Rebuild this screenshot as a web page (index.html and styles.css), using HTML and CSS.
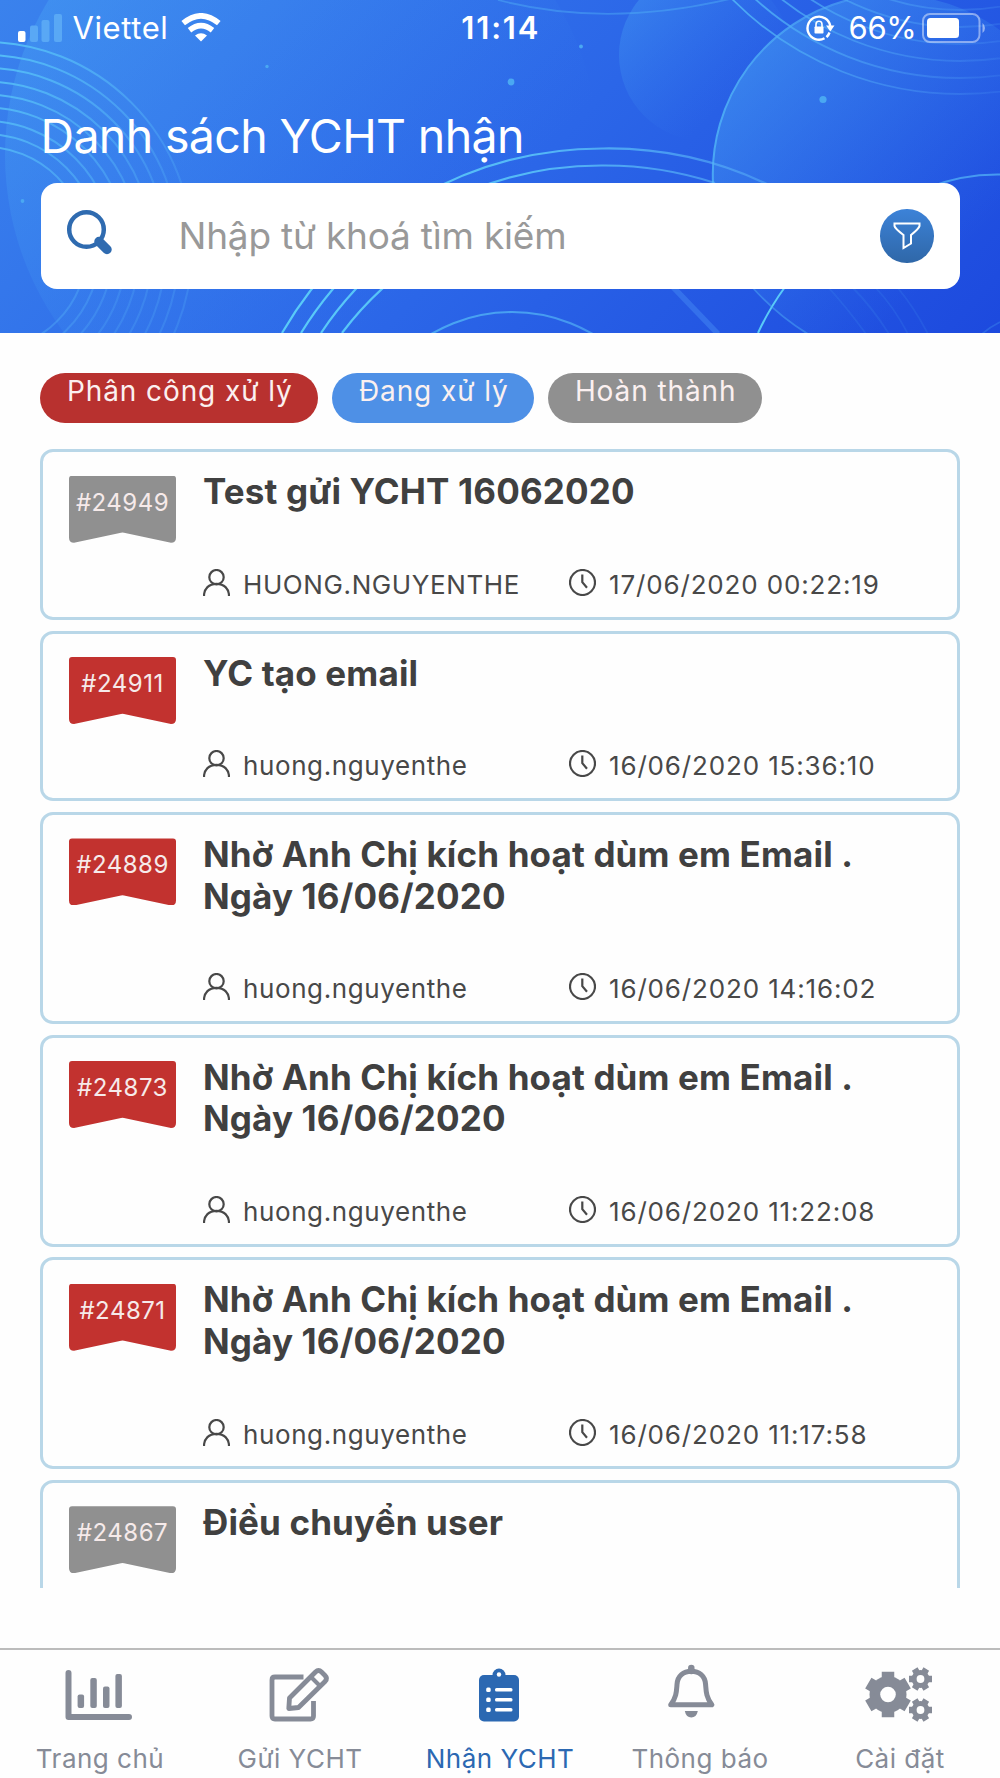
FILE: index.html
```html
<!DOCTYPE html>
<html lang="vi">
  <head>
    <meta charset="UTF-8">
    <title>Danh sách YCHT nhận</title>
    <link rel="stylesheet" href="styles.css">
  </head>
  <body>
    <svg class="defs" width="0" height="0">
      <symbol id="user" viewBox="0 0 27 27">
        <circle cx="13.5" cy="8.2" r="7.2"/>
        <path d="M1 27C1 19.5 6 14.8 13.5 14.8S26 19.5 26 27"/>
      </symbol>
      <symbol id="clock" viewBox="0 0 27 27">
        <circle cx="13.5" cy="13.5" r="12.5"/>
        <path d="M13.3 5.5V13.2L18 18.8"/>
      </symbol>
    </svg>

    <header class="header">
      <svg class="header_bg" viewBox="0 0 1000 333" preserveAspectRatio="none">
        <defs>
          <linearGradient id="bg" gradientUnits="userSpaceOnUse" x1="0" y1="0" x2="740" y2="690">
            <stop offset="0" stop-color="#3a82ed"/>
            <stop offset="0.5" stop-color="#2b66e8"/>
            <stop offset="1" stop-color="#1b46dd"/>
          </linearGradient>
          <linearGradient id="disc" x1="0.1" y1="0.1" x2="0.7" y2="0.7">
            <stop offset="0" stop-color="#4aa6f4" stop-opacity="0.65"/>
            <stop offset="1" stop-color="#3a86f0" stop-opacity="0"/>
          </linearGradient>
          <linearGradient id="ripple" gradientUnits="userSpaceOnUse" x1="0" y1="60" x2="190" y2="170">
            <stop offset="0" stop-color="#56c2f8" stop-opacity="0.9"/>
            <stop offset="1" stop-color="#56b2f8" stop-opacity="0.25"/>
          </linearGradient>
          <linearGradient id="corner" gradientUnits="userSpaceOnUse" x1="730" y1="0" x2="1000" y2="60">
            <stop offset="0" stop-color="#4fb4f6" stop-opacity="0.9"/>
            <stop offset="1" stop-color="#4f9cf6" stop-opacity="0.2"/>
          </linearGradient>
          <linearGradient id="wave" gradientUnits="userSpaceOnUse" x1="300" y1="0" x2="770" y2="0">
            <stop offset="0" stop-color="#59caf8"/>
            <stop offset="0.5" stop-color="#59c2f8" stop-opacity="0.9"/>
            <stop offset="1" stop-color="#59b0f8" stop-opacity="0.5"/>
          </linearGradient>
        </defs>
        <rect width="1000" height="333" fill="url(#bg)"/>
        <circle cx="302" cy="155" r="297" fill="url(#disc)" opacity="0.7"/>
        <circle cx="705" cy="55" r="86" fill="url(#disc)" opacity="0.6"/>
        <circle cx="893" cy="175" r="180" fill="url(#disc)" opacity="0.8"/>
        <g fill="none" stroke="url(#ripple)" stroke-width="2">
          <circle cx="-15" cy="249" r="207"/>
          <circle cx="-15" cy="249" r="194"/>
          <circle cx="-15" cy="249" r="181"/>
          <circle cx="-15" cy="249" r="167.500"/>
          <circle cx="-15" cy="249" r="154.500"/>
          <circle cx="-15" cy="249" r="141.500"/>
          <circle cx="-15" cy="249" r="128"/>
          <circle cx="-15" cy="249" r="115"/>
          <circle cx="-15" cy="249" r="102"/>
        </g>
        <g fill="none" stroke="url(#corner)" stroke-width="1.8">
          <circle cx="960" cy="-227" r="321"/>
          <circle cx="960" cy="-227" r="305"/>
          <circle cx="960" cy="-227" r="288"/>
          <circle cx="960" cy="-227" r="271"/>
          <circle cx="960" cy="-227" r="254"/>
          <circle cx="960" cy="-227" r="237"/>
          <path d="M713 183A180 180 0 0 1 848 0" stroke-width="2"/>
        </g>
        <g fill="none" stroke="url(#wave)" stroke-width="2.200">
          <path d="M282 333A370 370 0 0 1 603 148.500A370 370 0 0 1 775 188"/>
          <path d="M301 333A353 353 0 0 1 603 165.500A353 353 0 0 1 715 183"/>
          <path d="M321 333A335 335 0 0 1 520 193"/>
          <path d="M342 333A317 317 0 0 1 440 247"/>
          <circle cx="512" cy="471" r="159" opacity="0.7"/>
        </g>
        <g fill="none" stroke="#55b8f8" stroke-width="1.8">
          <path d="M758 333Q769 309 785 287" stroke="#59caf8" stroke-width="2"/>
          <path d="M927 188Q962 174 1000 174.500" opacity="0.7"/>
          <path d="M752 287Q778 316 808 334" opacity="0.4"/>
          <path d="M828 287Q848 309 866 334M852 287Q872 307 889 334M875 287Q894 307 908 334M897 287Q914 307 928 334" opacity="0.12"/>
          <path d="M982 334Q990 327 1000 322" opacity="0.25"/>
          <path d="M498 0Q610 29 738 -3" opacity="0.4"/>
          <path d="M673 287L718 334" stroke="#3f80f0" stroke-width="5.500" opacity="0.6"/>
        </g>
        <g fill="#4aa8f2">
          <circle cx="267" cy="66.500" r="1.700"/>
          <circle cx="22.500" cy="201" r="1.900"/>
          <circle cx="581" cy="46.500" r="1.900"/>
          <circle cx="511" cy="82" r="3.400"/>
          <circle cx="823" cy="99.500" r="3.600"/>
        </g>
      </svg>

      <div class="status">
        <div class="status_left">
          <svg width="44" height="28" viewBox="0 0 44 28">
            <rect x="0" y="17" width="7.500" height="11" rx="2" fill="#fff"/>
            <g fill="#59a8f5">
              <rect x="12" y="11.500" width="8" height="16.500" rx="2"/>
              <rect x="23.500" y="6" width="8" height="22" rx="2"/>
              <rect x="36" y="0" width="8" height="28" rx="2"/>
            </g>
          </svg>
          <span class="carrier">Viettel</span>
          <svg class="wifi" width="40" height="29" viewBox="0 0 40 29">
            <g fill="none" stroke="#fff" stroke-width="5.600">
              <path d="M2.200 10.200Q20-4.500 37.800 10.200"/>
              <path d="M8.500 17.200Q20 8.200 31.500 17.200"/>
            </g>
            <path d="M20 28.500L14 22.500Q20 18 26 22.500Z" fill="#fff"/>
          </svg>
        </div>
        <span class="time">11:14</span>
        <div class="status_right">
          <svg width="29" height="26" viewBox="0 0 29 26">
            <path d="M18.500 23.300A11.500 11.500 0 1 1 24.300 11" fill="none" stroke="#fff" stroke-width="2.400"/>
            <path d="M20.500 22.200A11.500 11.500 0 0 0 23.500 17.500" fill="none" stroke="#fff" stroke-width="2.400"/>
            <path d="M20 10.500H28.500L24.300 16.500Z" fill="#fff"/>
            <rect x="8.500" y="11.500" width="9" height="7" rx="0.800" fill="#fff"/>
            <path d="M10 12V9.500A3 3.200 0 0 1 16 9.500V12" fill="none" stroke="#fff" stroke-width="1.600"/>
          </svg>
          <span class="percent">66%</span>
          <svg width="64" height="30" viewBox="0 0 64 30">
            <rect x="1" y="1" width="56.500" height="28" rx="7" fill="none" stroke="#fff" stroke-opacity="0.45" stroke-width="2"/>
            <rect x="5" y="5" width="32" height="20" rx="3.500" fill="#fff"/>
            <path d="M60.500 10Q63 12 63 15T60.500 20Z" fill="#fff" fill-opacity="0.5"/>
          </svg>
        </div>
      </div>

      <h1 class="title">Danh sách YCHT nhận</h1>

      <div class="search">
        <svg width="48" height="48" viewBox="0 0 48 48">
          <circle cx="20.500" cy="20.500" r="17.300" fill="none" stroke="#2f6bb0" stroke-width="4.500"/>
          <path d="M33 32.500L41 40.500" stroke="#2f6bb0" stroke-width="9.500" stroke-linecap="round"/>
        </svg>
        <span class="placeholder">Nhập từ khoá tìm kiếm</span>
        <div class="filter">
          <svg width="28" height="28" viewBox="0 0 28 28">
            <path d="M1.500 1.500H26.500V4Q26 6.500 18 13V21.500L10.500 26V13Q2 6.500 1.500 4Z" fill="none" stroke="#fff" stroke-width="2"/>
          </svg>
        </div>
      </div>
    </header>

    <div class="legend">
      <span class="chip red">Phân công xử lý</span>
      <span class="chip blue">Đang xử lý</span>
      <span class="chip gray">Hoàn thành</span>
    </div>

    <div class="list">
      <div class="card">
        <div class="ribbon gray">#24949</div>
        <div class="card_body">
          <div class="card_title">Test gửi YCHT 16062020</div>
          <div class="meta">
            <div class="who"><svg><use href="#user"/></svg>HUONG.NGUYENTHE</div>
            <div class="when"><svg><use href="#clock"/></svg>17/06/2020 00:22:19</div>
          </div>
        </div>
      </div>
      <div class="card">
        <div class="ribbon red">#24911</div>
        <div class="card_body">
          <div class="card_title">YC tạo email</div>
          <div class="meta">
            <div class="who"><svg><use href="#user"/></svg>huong.nguyenthe</div>
            <div class="when"><svg><use href="#clock"/></svg>16/06/2020 15:36:10</div>
          </div>
        </div>
      </div>
      <div class="card tall">
        <div class="ribbon red">#24889</div>
        <div class="card_body">
          <div class="card_title">Nhờ Anh Chị kích hoạt dùm em Email .<br>Ngày 16/06/2020</div>
          <div class="meta">
            <div class="who"><svg><use href="#user"/></svg>huong.nguyenthe</div>
            <div class="when"><svg><use href="#clock"/></svg>16/06/2020 14:16:02</div>
          </div>
        </div>
      </div>
      <div class="card tall">
        <div class="ribbon red">#24873</div>
        <div class="card_body">
          <div class="card_title">Nhờ Anh Chị kích hoạt dùm em Email .<br>Ngày 16/06/2020</div>
          <div class="meta">
            <div class="who"><svg><use href="#user"/></svg>huong.nguyenthe</div>
            <div class="when"><svg><use href="#clock"/></svg>16/06/2020 11:22:08</div>
          </div>
        </div>
      </div>
      <div class="card tall">
        <div class="ribbon red">#24871</div>
        <div class="card_body">
          <div class="card_title">Nhờ Anh Chị kích hoạt dùm em Email .<br>Ngày 16/06/2020</div>
          <div class="meta">
            <div class="who"><svg><use href="#user"/></svg>huong.nguyenthe</div>
            <div class="when"><svg><use href="#clock"/></svg>16/06/2020 11:17:58</div>
          </div>
        </div>
      </div>
      <div class="card">
        <div class="ribbon gray">#24867</div>
        <div class="card_body">
          <div class="card_title">Điều chuyển user</div>
        </div>
      </div>
    </div>

    <nav class="tabs">
      <div class="tab">
        <svg width="70" height="62" viewBox="0 0 70 62" fill="none" stroke="currentColor" stroke-linecap="round" stroke-linejoin="round">
          <path d="M3.500 13V57H64" stroke-width="6"/>
          <g fill="currentColor" stroke="none">
            <rect x="12.600" y="34.500" width="6.500" height="13.500" rx="2"/>
            <rect x="25.300" y="18" width="6.500" height="30" rx="2"/>
            <rect x="38" y="26.500" width="6.500" height="21.500" rx="2"/>
            <rect x="50.400" y="14" width="6.500" height="34" rx="2"/>
          </g>
        </svg>
        <span>Trang chủ</span>
      </div>
      <div class="tab">
        <svg width="70" height="62" viewBox="0 0 70 62" fill="none" stroke="currentColor" stroke-width="4.800" stroke-linejoin="round">
          <path d="M38.500 17H10Q7 17 7 20V56Q7 59 10 59H45.500Q48.500 59 48.500 56V41"/>
          <path d="M23.800 48.500L24.500 38L50.500 12Q53.500 9 56.500 12L60 15.500Q63 18.500 60 21.500L33.500 47.500Z"/>
          <path d="M46 17L55 26" stroke-width="4"/>
        </svg>
        <span>Gửi YCHT</span>
      </div>
      <div class="tab active">
        <svg width="70" height="62" viewBox="0 0 70 62" fill="currentColor">
          <rect x="14" y="15" width="40" height="46.500" rx="5"/>
          <circle cx="34" cy="15" r="6.500"/>
          <g fill="#fff">
            <circle cx="34" cy="14.500" r="2.200"/>
            <rect x="21.200" y="27.500" width="4.500" height="4.500" rx="1.500"/>
            <rect x="21.200" y="37.500" width="4.500" height="4.500" rx="1.500"/>
            <rect x="21.200" y="47.500" width="4.500" height="4.500" rx="1.500"/>
            <rect x="30" y="28" width="17.500" height="3.600" rx="1.500"/>
            <rect x="30" y="38" width="17.500" height="3.600" rx="1.500"/>
            <rect x="30" y="48" width="17.500" height="3.600" rx="1.500"/>
          </g>
        </svg>
        <span>Nhận YCHT</span>
      </div>
      <div class="tab">
        <svg width="70" height="62" viewBox="0 0 70 62" fill="none" stroke="currentColor" stroke-width="5" stroke-linejoin="round">
          <path d="M5.700 44.800C11.500 37.500 11.500 31 12 24.500C12.500 16 18.500 11.300 26.300 11.300S40.100 16 40.600 24.500C41.100 31 41.100 37.500 46.900 44.800Z"/>
          <path d="M26.300 8V11" stroke-width="6.500" stroke-linecap="round"/>
          <path d="M19.800 51H32.800Q31.500 57.500 26.300 57.500T19.800 51Z" fill="currentColor" stroke="none"/>
        </svg>
        <span>Thông báo</span>
      </div>
      <div class="tab">
        <svg width="70" height="62" viewBox="0 0 70 62" stroke="currentColor" stroke-linejoin="round">
          <g transform="translate(23 34.500)" fill="currentColor">
            <circle r="18.500" stroke="none"/>
            <path d="M0-22.800V22.800M-19.700-11.400L19.700 11.400M-19.700 11.400L19.700-11.400" stroke-width="12.500"/>
            <circle r="7.800" fill="#fff" stroke="none"/>
          </g>
          <g transform="translate(55.500 19)" fill="currentColor">
            <circle r="9" stroke="none"/>
            <path d="M-11.500 0H11.500M-5.800-10L5.800 10M5.800-10L-5.800 10" stroke-width="6.500"/>
            <circle r="3.900" fill="#fff" stroke="none"/>
          </g>
          <g transform="translate(55.500 50)" fill="currentColor">
            <circle r="9" stroke="none"/>
            <path d="M-11.500 0H11.500M-5.800-10L5.800 10M5.800-10L-5.800 10" stroke-width="6.500"/>
            <circle r="3.900" fill="#fff" stroke="none"/>
          </g>
        </svg>
        <span>Cài đặt</span>
      </div>
    </nav>
  </body>
</html>
```
FILE: styles.css
```css
* {
	box-sizing: border-box;
}
body {
	margin: 0;
	width: 1000px;
	height: 1778px;
	display: flex;
	flex-direction: column;
	overflow: hidden;
	background: #fefefe;
	color: #404040;
	font-family: Inter, "Noto Sans", sans-serif;
}
svg {
	display: block;
	flex: none;
}
.defs {
	position: absolute;
}

/*header*/
.header {
	position: relative;
	height: 333px;
	flex: none;
	color: #fff;
}
.header_bg {
	position: absolute;
	inset: 0;
	width: 100%;
	height: 100%;
}
.status {
	position: relative;
	height: 55px;
	padding: 0 14px 0 17.5px;
	display: grid;
	grid-template-columns: 1fr auto 1fr;
	align-items: center;
	font-size: 31px;
	line-height: 55px;
}
.status_left,
.status_right {
	display: flex;
	align-items: center;
}
.status_right {
	justify-content: flex-end;
}
.carrier {
	margin-left: 11px;
	letter-spacing: 0.6px;
}
.wifi {
	margin-left: 12.5px;
}
.time {
	margin-left: -2px;
	font-weight: 600;
	letter-spacing: 1.8px;
}
.percent {
	margin: 0 5.5px 0 14px;
	letter-spacing: -0.3px;
}
.title {
	position: relative;
	margin: 51px 0 0 40.5px;
	font-size: 46.5px;
	line-height: 60px;
	font-weight: 400;
	letter-spacing: -0.65px;
}
.search {
	position: relative;
	margin: 17px 40.5px 0;
	height: 106px;
	padding: 0 26px 0 25.5px;
	display: flex;
	align-items: center;
	background: #fff;
	border-radius: 16px;
}
.search > svg {
	margin-top: -7px;
}
.placeholder {
	flex: 1;
	margin-left: 64.5px;
	font-size: 37px;
	line-height: 48px;
	letter-spacing: -0.2px;
	color: #999;
}
.filter {
	width: 53.5px;
	height: 53.5px;
	display: flex;
	align-items: center;
	justify-content: center;
	border-radius: 50%;
	background: linear-gradient(#3c82d8, #2f67a8);
}

/*status legend*/
.legend {
	flex: none;
	display: flex;
	gap: 13.5px;
	margin: 40.3px 40px 0;
}
.chip {
	height: 49.3px;
	padding: 0 25.8px 0 27px;
	border-radius: 25px;
	font-size: 28px;
	line-height: 37px;
	letter-spacing: 0.9px;
	color: #fbf0f0;
}
.red {
	background: #b8312f;
}
.blue {
	background: #4e90e6;
}
.gray {
	background: #909090;
}

/*request cards*/
.list {
	flex: none;
	height: 1138.4px;
	margin: 26.7px 40px 0;
	overflow: hidden;
}
.card {
	display: flex;
	height: 170.67px;
	margin-bottom: 10.67px;
	padding: 19.2px 20px 0 26px;
	border: 3px solid #b9d7e8;
	border-radius: 13px;
}
.card.tall {
	height: 212px;
}
.ribbon {
	flex: none;
	width: 107px;
	height: 67px;
	margin-top: 4.3px;
	font-size: 24px;
	line-height: 54px;
	letter-spacing: 0.5px;
	text-align: center;
	color: #f6eaea;
	clip-path: path("M3 0H104Q107 0 107 3V62Q107 67 102 67L55 57Q53.500 56.500 52 57L5 67Q0 67 0 62V3Q0 0 3 0Z");
}
.ribbon.red {
	background: #c2322f;
}
.card_body {
	flex: 1;
	padding-left: 27px;
}
.card_title {
	font-size: 35px;
	font-weight: 700;
	line-height: 41.6px;
	letter-spacing: 0.15px;
}
.meta {
	display: grid;
	grid-template-columns: 366px 1fr;
	margin-top: 56px;
	font-size: 26px;
	line-height: 31.5px;
	letter-spacing: 0.6px;
	color: #484848;
}
.meta svg {
	width: 27px;
	height: 27px;
	fill: none;
	stroke: #484848;
	stroke-width: 2.2;
}
.who,
.when {
	display: flex;
	gap: 13px;
}
.when {
	letter-spacing: 0.85px;
}

/*bottom tabs*/
.tabs {
	flex: none;
	height: 130px;
	margin-top: auto;
	display: grid;
	grid-template-columns: repeat(5, 1fr);
	border-top: 2px solid #bcbcbc;
}
.tab {
	display: flex;
	flex-direction: column;
	align-items: center;
	padding-top: 10px;
	font-size: 26px;
	line-height: 36px;
	letter-spacing: 0.5px;
	color: #868b97;
}
.tab span {
	margin-top: 19px;
}
.tab.active {
	color: #2b68b2;
}
```
